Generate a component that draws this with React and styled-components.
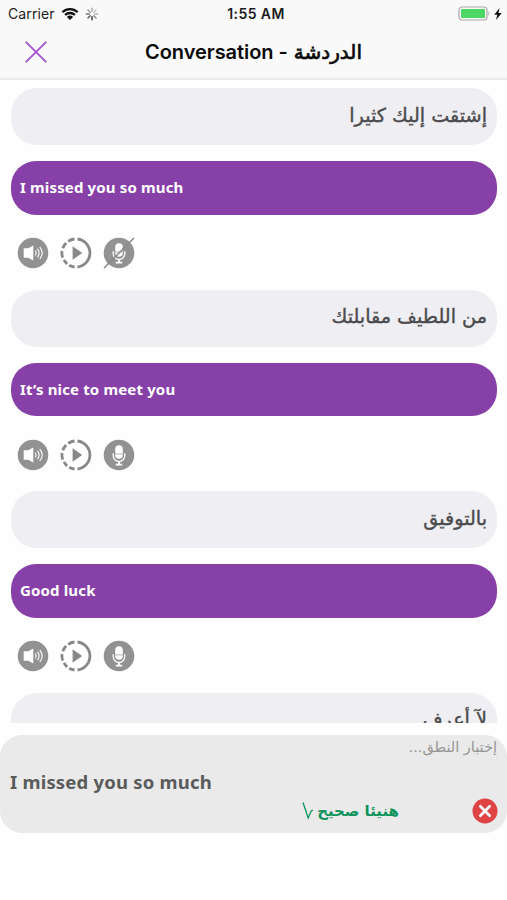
import React from 'react';
import styled, {createGlobalStyle} from 'styled-components';

const GlobalStyle = createGlobalStyle`
  * {
    box-sizing: border-box;
  }
  body {
    margin: 0;
    background: #fefefe;
    font-family: Inter, "Liberation Sans", sans-serif;
  }
  svg {
    display: block;
  }
`;
const Screen = styled.div`
  width: 507px;
  height: 900px;
  display: flex;
  flex-direction: column;
  overflow: hidden;
`;
const Header = styled.header`
  height: 80px;
  flex-shrink: 0;
  background: #f9f9f9;
  border-bottom: 2px solid #ebebec;
`;
const StatusBar = styled.div`
  height: 27px;
  display: grid;
  grid-template-columns: 1fr auto 1fr;
  align-items: center;
  padding: 0 5px 0 8px;
  color: #1c1c1c;
  font-size: 14px;
`;
const StatusGroup = styled.div`
  display: flex;
  align-items: center;
  justify-content: ${props => props.$end ? 'flex-end' : 'flex-start'};
  gap: ${props => props.$end ? 3 : 6}px;
`;
const Carrier = styled.span`
  letter-spacing: 0.1px;
`;
const Clock = styled.span`
  padding-left: 2px;
  font-weight: 600;
  font-size: 14px;
  letter-spacing: 0.4px;
`;
const NavBar = styled.div`
  height: 51px;
  display: grid;
  grid-template-columns: 1fr auto 1fr;
  align-items: center;
  padding: 0 25px 1px;
`;
const Title = styled.h1`
  margin: 0;
  display: flex;
  align-items: center;
  gap: 6px;
  height: 24px;
  font-size: 20px;
  font-weight: 600;
  letter-spacing: -0.05px;
  color: #0a0a0a;
`;
const ArabicTitle = styled.span`
  font-family: "DejaVu Sans", sans-serif;
  font-size: 20px;
  font-weight: 400;
  letter-spacing: 0;
  -webkit-text-stroke: 0.7px currentColor;
`;
const Conversation = styled.main`
  height: 643px;
  flex-shrink: 0;
  overflow: hidden;
  padding: 8px 10px 0 11px;
`;
const Phrase = styled.section`
  height: 201.6px;
`;
const Bubble = styled.div`
  height: 57px;
  padding: 0 10px 3px;
  display: flex;
  align-items: center;
  border-radius: 26px;
  background: #efeef3;
  color: #4b4b4d;
`;
const Arabic = styled.span`
  flex-grow: 1;
  direction: rtl;
  font-family: "DejaVu Sans", sans-serif;
  font-size: ${props => props.$size || 19}px;
  -webkit-text-stroke: ${props => props.$stroke || 0}px currentColor;
  white-space: nowrap;
`;
const Translation = styled.div`
  height: 53.5px;
  margin-top: 16.3px;
  padding: 0 9px 2px;
  display: flex;
  align-items: center;
  border-radius: 25px;
  background: #8840a9;
  color: #fff;
  font-family: "Noto Sans", sans-serif;
  font-size: 15px;
  font-weight: 700;
  letter-spacing: 0.15px;
`;
const Controls = styled.div`
  height: 74.8px;
  padding: 2px 0 0 6px;
  display: flex;
  align-items: center;
  gap: 11px;
`;
const TestPanel = styled.section`
  height: 98px;
  margin-top: 12px;
  flex-shrink: 0;
  padding: 3px 10px 0;
  border-radius: 22px;
  background: #eaeaea;
  display: flex;
  flex-direction: column;
`;
const PanelHint = styled.div`
  height: 18px;
  display: flex;
  align-items: center;
  color: #969696;
`;
const Heard = styled.div`
  height: 32px;
  margin-top: 9px;
  display: flex;
  align-items: center;
  color: #5b5b5b;
  font-family: "Noto Sans", sans-serif;
  font-size: 18.5px;
  font-weight: 700;
  letter-spacing: 0.2px;
`;
const ResultRow = styled.div`
  height: 26px;
  margin: 1px -1px 0 0;
  display: flex;
  align-items: center;
  justify-content: flex-end;
`;
const Result = styled.div`
  display: flex;
  align-items: center;
  gap: 3px;
  margin-right: 73px;
  color: #0d935b;
  font-weight: 700;
`;

function Wifi() {
  return (
    <svg width="18" height="14" viewBox="0 0 18 14" fill="none" stroke="#111" strokeWidth="2.3">
      <path d="M1.4 5.1a11 11 0 0 1 15.2 0M4.1 8a7 7 0 0 1 9.8 0" />
      <path d="M9 13 5.9 9.9a4.5 4.5 0 0 1 6.2 0z" fill="#111" stroke="none" />
    </svg>
  );
}
function Spinner() {
  const shades = ['#aaa', '#c4c4c4', '#b7b7b7', '#888', '#333', '#555', '#777', '#999'];
  return (
    <svg width="14" height="14" viewBox="-7 -7 14 14">
      {shades.map((shade, i) => (
        <path key={i} d="M0-2.6V-5.7" stroke={shade} strokeWidth="1.4" strokeLinecap="round" transform={`rotate(${i * 45})`} />
      ))}
    </svg>
  );
}
function Battery() {
  return (
    <svg width="33" height="15" viewBox="0 0 33 15">
      <rect x="1" y="1" width="28" height="13" rx="3" fill="#f9f9f9" stroke="#aaa" strokeWidth="1.2" />
      <rect x="3" y="3" width="24" height="9" rx="1" fill="#4cd663" />
      <path d="M30.4 5q2 2.5 0 5z" fill="#aaa" />
    </svg>
  );
}
function Bolt() {
  return (
    <svg width="8" height="12" viewBox="0 0 8 12">
      <path d="M5.5 0 .3 6.8h3L2 12 7.7 4.9H4.5z" fill="#111" />
    </svg>
  );
}
function Close() {
  return (
    <svg width="22" height="22" viewBox="0 0 22 22">
      <path d="M1.3 1.3 20.7 20.7M20.7 1.3 1.3 20.7" stroke="#a855cf" strokeWidth="1.9" strokeLinecap="round" />
    </svg>
  );
}
function Speaker() {
  return (
    <svg width="32" height="32" viewBox="0 0 32 32">
      <circle cx="16" cy="16" r="15.3" fill="#929292" />
      <path d="M6.7 11.3h4.6l5-2.8v15l-5-2.8H6.7z" fill="#fff" />
      <path d="M18.5 14q1.4 2 0 4M20.7 12.2q2.8 3.8 0 7.6M23 10.4q4.4 5.6 0 11.2" fill="none" stroke="#fff" strokeWidth="1.1" strokeLinecap="round" />
    </svg>
  );
}
function SlowPlay() {
  return (
    <svg width="32" height="32" viewBox="0 0 32 32">
      <path d="M17.5 2A14.1 14.1 0 0 1 17.5 30" fill="none" stroke="#888" strokeWidth="2.8" />
      <path
        d="M14.5 2A14 14 0 0 0 8.2 4.3M6.1 6A14 14 0 0 0 2.8 11.3M2 14A14 14 0 0 0 2.7 20.6M4 22.9A14 14 0 0 0 7.2 26.9M9.2 28.2A14 14 0 0 0 14.5 30"
        fill="none"
        stroke="#888"
        strokeWidth="2.8"
      />
      <path d="M12.6 9.2v13.6l9.6-6.8z" fill="#888" />
    </svg>
  );
}
function Mic({muted}) {
  return (
    <svg width="32" height="32" viewBox="0 0 32 32">
      <circle cx="16" cy="16" r="15.3" fill="#929292" />
      <rect x="12.2" y="6.3" width="7.6" height="13.4" rx="3.8" fill="#fff" />
      <path d="M10.2 14.3v2.3a5.8 5.8 0 0 0 11.6 0v-2.3" fill="none" stroke="#fff" strokeWidth="1.3" />
      <path d="M16 22.5v3M12.8 25.7h6.4" stroke="#fff" strokeWidth="1.8" />
      <path d="M12.2 14.9h7.6" stroke="#929292" strokeWidth="0.7" />
      {muted && <path d="M1 31 31 1" stroke="#888" strokeWidth="1.5" />}
    </svg>
  );
}
function Tick() {
  return (
    <svg width="12" height="19" viewBox="0 0 12 19">
      <path d="M1 .5 6.2 16 9.3 8.7 11 8.3" fill="none" stroke="#0d935b" strokeWidth="1.3" />
    </svg>
  );
}
function Dismiss() {
  return (
    <svg width="26" height="26" viewBox="0 0 26 26">
      <circle cx="13" cy="13" r="12.5" fill="#df4343" />
      <path d="M8.3 8.3l9.4 9.4M17.7 8.3l-9.4 9.4" stroke="#fff" strokeWidth="2.7" strokeLinecap="round" />
    </svg>
  );
}

const phrases = [
  {arabic: 'إشتقت إليك كثيرا', english: 'I missed you so much', muted: true},
  {arabic: 'من اللطيف مقابلتك', english: 'It’s nice to meet you'},
  {arabic: 'بالتوفيق', english: 'Good luck'},
  {arabic: 'لآ أعرف'},
];

function App() {
  return (
    <Screen>
      <GlobalStyle />
      <Header>
        <StatusBar>
          <StatusGroup><Carrier>Carrier</Carrier><Wifi /><Spinner /></StatusGroup>
          <Clock>1:55 AM</Clock>
          <StatusGroup $end><Battery /><Bolt /></StatusGroup>
        </StatusBar>
        <NavBar>
          <Close />
          <Title><span>Conversation -</span><ArabicTitle>الدردشة</ArabicTitle></Title>
        </NavBar>
      </Header>
      <Conversation>
        {phrases.map(phrase => (
          <Phrase key={phrase.arabic}>
            <Bubble><Arabic $size={19.2} $stroke={0.4}>{phrase.arabic}</Arabic></Bubble>
            {phrase.english && <Translation>{phrase.english}</Translation>}
            {phrase.english && <Controls><Speaker /><SlowPlay /><Mic muted={phrase.muted} /></Controls>}
          </Phrase>
        ))}
      </Conversation>
      <TestPanel>
        <PanelHint><Arabic $size={14.5}>إختبار النطق...</Arabic></PanelHint>
        <Heard>I missed you so much</Heard>
        <ResultRow>
          <Result><Tick /><Arabic $size={15}>هنيئا صحيح</Arabic></Result>
          <Dismiss />
        </ResultRow>
      </TestPanel>
    </Screen>
  );
}
export default App;
